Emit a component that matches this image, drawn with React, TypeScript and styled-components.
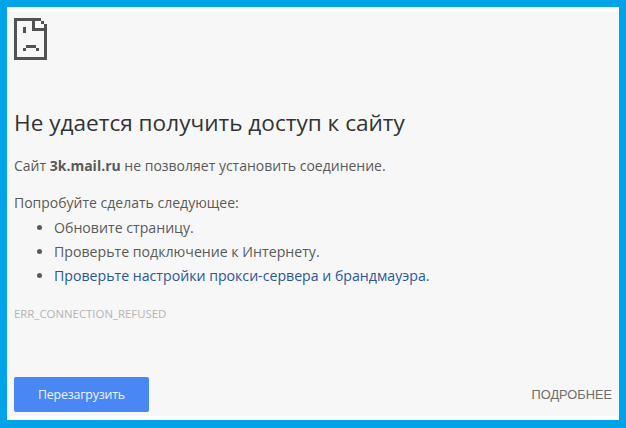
import React from "react";
import styled, { createGlobalStyle } from "styled-components";

const GlobalStyle = createGlobalStyle`
  html, body {
    margin: 0;
    padding: 0;
    background: #00a2e8;
  }
`;

const Frame = styled.div`
  box-sizing: border-box;
  width: 626px;
  height: 428px;
  padding: 7px;
  background: #00a2e8;
  overflow: hidden;
`;

const Page = styled.div`
  box-sizing: border-box;
  height: 413px;
  padding: 6px 7px 0 7px;
  background: #f7f7f7;
  border-top: 5px solid #fff;
  border-bottom: 4px solid #fff;
  font-family: "Open Sans", "Noto Sans", sans-serif;
  color: #5a5a5a;
  font-size: 14px;
  display: flex;
  flex-direction: column;
`;

const SadIcon = styled.svg`
  display: block;
  width: 34px;
  height: 42px;
  flex-shrink: 0;
`;

const Heading = styled.h1`
  margin: 48px 0 0 0;
  font-size: 22.6px;
  line-height: 30px;
  font-weight: 400;
  color: #333;
`;

const Line = styled.p`
  margin: 19px 0 0 0;
  line-height: 18px;
`;

const Suggest = styled.p`
  margin: 19px 0 0 0;
  line-height: 18px;
`;

const Tips = styled.ul`
  margin: 4px 0 0 0;
  padding: 0 0 0 40px;
  font-size: 14.15px;
`;

const Tip = styled.li`
  line-height: 24px;
  color: ${(props) => props.color || "inherit"};
  &::marker {
    color: #5a5a5a;
  }
`;

const Code = styled.div`
  margin-top: 19px;
  font-size: 11.4px;
  line-height: 14px;
  color: #b4b4b4;
`;

const Actions = styled.div`
  margin-top: auto;
  margin-bottom: 4px;
  display: flex;
  align-items: center;
  justify-content: space-between;
`;

const ReloadButton = styled.button`
  width: 135px;
  height: 35px;
  padding: 0;
  border: none;
  border-radius: 2px;
  background: #4987f5;
  color: #eef4ff;
  font-family: "Open Sans", "Noto Sans", sans-serif;
  font-size: 12.4px;
  letter-spacing: -0.2px;
`;

const Details = styled.span`
  font-family: "Liberation Sans", sans-serif;
  font-size: 12.8px;
  color: #6e6e6e;
`;

export default function App() {
  return (
    <Frame>
      <GlobalStyle />
      <Page>
        <SadIcon viewBox="0 0 34 42" fill="#525252">
          <rect x="21" y="3" width="9" height="7" fill="#fff" />
          <rect x="0" y="0" width="27" height="3" />
          <rect x="0" y="0" width="3" height="42" />
          <rect x="0" y="39" width="33" height="3" />
          <rect x="30" y="9" width="3" height="33" />
          <rect x="18" y="0" width="3" height="13" />
          <rect x="18" y="10" width="15" height="3" />
          <rect x="27" y="3" width="3" height="3" />
          <rect x="30" y="6" width="3" height="3" />
          <rect x="9" y="9" width="3" height="6" />
          <rect x="12" y="27" width="10" height="3" />
          <rect x="9" y="30" width="3" height="3" />
          <rect x="22" y="30" width="3" height="3" />
        </SadIcon>
        <Heading>Не удается получить доступ к сайту</Heading>
        <Line>
          Сайт <b>3k.mail.ru</b> не позволяет установить соединение.
        </Line>
        <Suggest>Попробуйте сделать следующее:</Suggest>
        <Tips>
          <Tip>Обновите страницу.</Tip>
          <Tip>Проверьте подключение к Интернету.</Tip>
          <Tip color="#2a5699">Проверьте настройки прокси-сервера и брандмауэра.</Tip>
        </Tips>
        <Code>ERR_CONNECTION_REFUSED</Code>
        <Actions>
          <ReloadButton>Перезагрузить</ReloadButton>
          <Details>ПОДРОБНЕЕ</Details>
        </Actions>
      </Page>
    </Frame>
  );
}
